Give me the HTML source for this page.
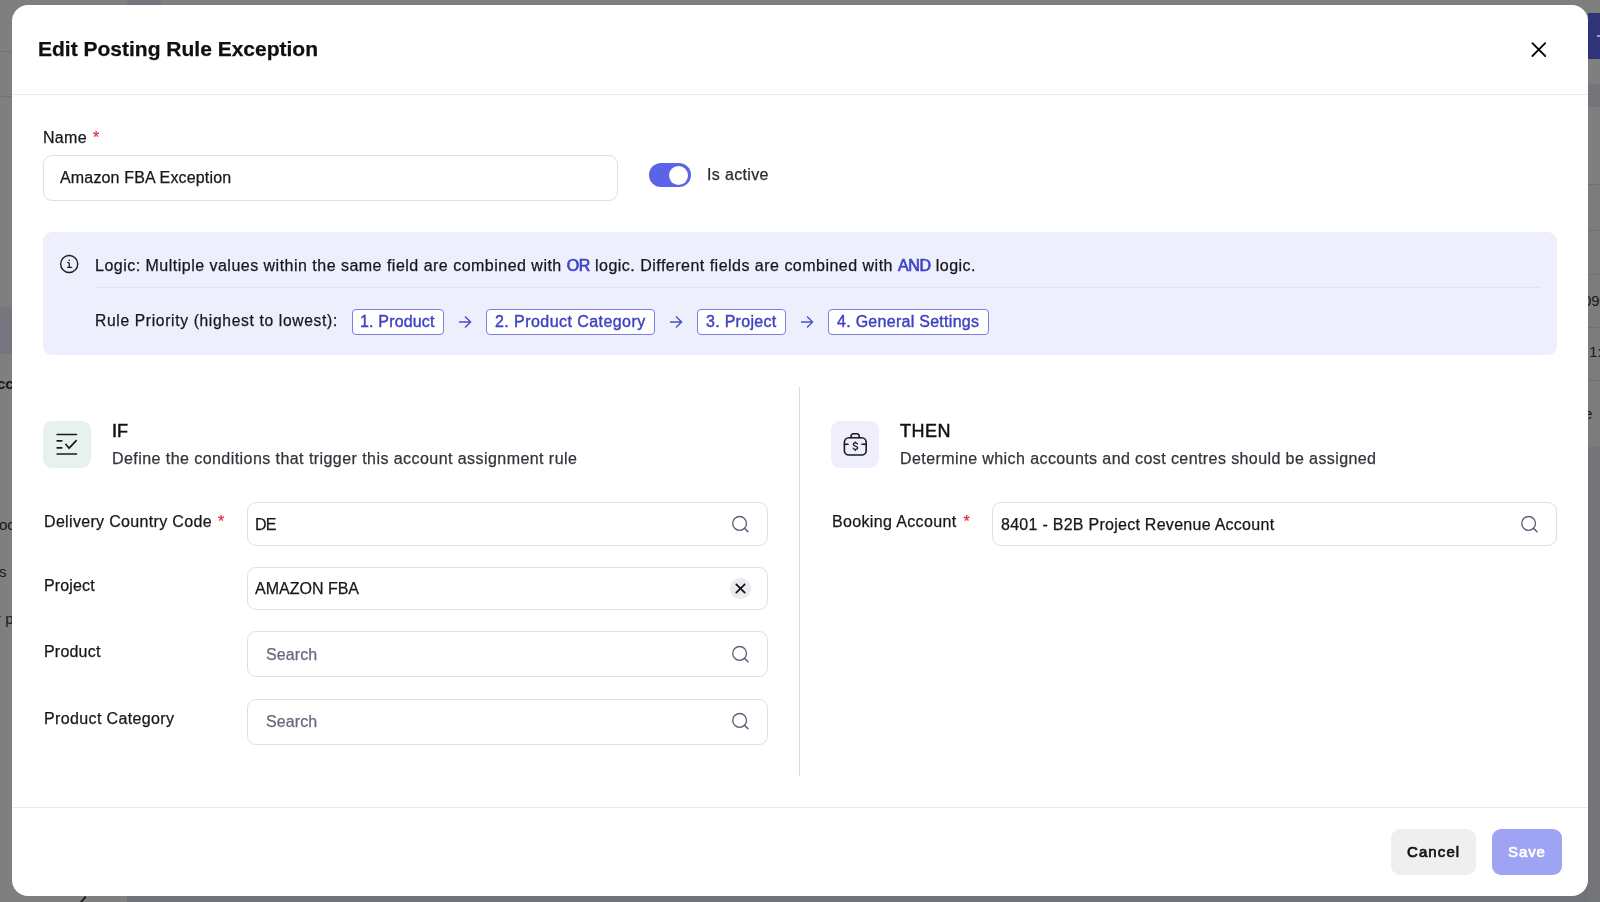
<!DOCTYPE html>
<html><head><meta charset="utf-8">
<style>
*{box-sizing:border-box;margin:0;padding:0}
html,body{width:1600px;height:902px;overflow:hidden;background:#7f7f7f;font-family:"Liberation Sans",sans-serif;color:#17171d;position:relative;-webkit-font-smoothing:antialiased}
.a{position:absolute}
.t{position:absolute;white-space:nowrap;line-height:16px;font-size:16px;will-change:transform;-webkit-text-stroke:0.25px currentColor}
.inp{position:absolute;border:1px solid #dedfe6;border-radius:9px;background:#fff}
.chip{position:absolute;border:1px solid #7a7fdc;border-radius:4px;background:#fff;height:26px}
.chip span{will-change:transform;-webkit-text-stroke:0.4px currentColor;position:absolute;top:4px;white-space:nowrap;color:#3c42c2;font-size:16px;line-height:16px}
.arr{position:absolute;top:316px}
.req{color:#e3263b}
.ph{color:#646a7e}
.bgt{position:absolute;white-space:nowrap;font-size:15px;line-height:15px;color:#1a1a1a}
</style></head><body>
<!-- background fragments -->
<div class="a" style="left:127px;top:0;width:34px;height:6px;background:#76777c"></div>
<div class="a" style="left:127px;top:880px;width:1473px;height:22px;background:#717277"></div>
<div class="a" style="left:0;top:51px;width:12px;height:1px;background:#727272"></div>
<div class="a" style="left:0;top:96px;width:12px;height:1px;background:#727272"></div>
<div class="a" style="left:0;top:307px;width:12px;height:47px;background:#76767e"></div>
<div class="bgt" style="left:-3px;top:376px;font-weight:bold">cc</div>
<div class="bgt" style="left:-1px;top:517px">oc</div>
<div class="bgt" style="left:-1px;top:564px">s</div>
<div class="bgt" style="left:-4px;top:611px">r p</div>
<div class="a" style="left:1588px;top:13px;width:12px;height:46px;background:#2f3378"></div>
<div class="a" style="left:1597px;top:35px;width:3px;height:2px;background:#9a9cc0"></div>
<div class="a" style="left:1588px;top:84px;width:12px;height:23px;background:#747579"></div>
<div class="a" style="left:1588px;top:184px;width:12px;height:263px;background:#7b7c7b"></div>
<div class="a" style="left:1588px;top:184px;width:12px;height:1px;background:#717171"></div>
<div class="a" style="left:1588px;top:230px;width:12px;height:1px;background:#717171"></div>
<div class="a" style="left:1588px;top:274px;width:12px;height:1px;background:#717171"></div>
<div class="a" style="left:1588px;top:327px;width:12px;height:1px;background:#717171"></div>
<div class="a" style="left:1588px;top:380px;width:12px;height:1px;background:#717171"></div>
<div class="bgt" style="left:1583px;top:293px">09</div>
<div class="bgt" style="left:1589px;top:344px">1:</div>
<div class="bgt" style="left:1584px;top:406px">e</div>
<div class="a" style="left:1588px;top:447px;width:12px;height:455px;background:#737478"></div>
<svg class="a" style="left:76px;top:892px" width="14" height="10" viewBox="0 0 14 10"><path d="M4.6 10.5L9.8 4.6" stroke="#111" stroke-width="1.6"/></svg>
<!-- modal -->
<div class="a" style="left:12px;top:5px;width:1576px;height:891px;background:#fff;border-radius:16px"></div>

<div class="t" style="left:38px;top:38px;font-size:21px;line-height:21px;font-weight:bold;color:#0e0e13">Edit Posting Rule Exception</div>
<svg class="a" style="left:1530px;top:41px" width="17" height="17" viewBox="0 0 17 17"><path d="M2.4 2.2L15.2 15M15.2 2.2L2.4 15" stroke="#050507" stroke-width="1.8" stroke-linecap="round"/></svg>
<div class="a" style="left:12px;top:94px;width:1576px;height:1px;background:#e9e9ef"></div>

<div class="t" style="left:43px;top:130px;letter-spacing:0.3px">Name<span class="req" style="margin-left:6px">*</span></div>
<div class="inp" style="left:43px;top:155px;width:575px;height:46px"></div>
<div class="t" style="left:60px;top:170px;letter-spacing:0.16px">Amazon FBA Exception</div>

<div class="a" style="left:649px;top:163px;width:42px;height:24px;border-radius:12px;background:#5b63e9"></div>
<div class="a" style="left:669px;top:166px;width:19px;height:19px;border-radius:50%;background:#fff"></div>
<div class="t" style="left:707px;top:167px;color:#2a2a31;letter-spacing:0.35px">Is active</div>

<!-- info box -->
<div class="a" style="left:43px;top:232px;width:1514px;height:122.5px;background:#eeeffc;border-radius:9px"></div>
<svg class="a" style="left:59px;top:254px" width="20" height="20" viewBox="0 0 20 20"><circle cx="10.2" cy="10" r="8.55" fill="none" stroke="#1d1d24" stroke-width="1.4"/><path d="M8.9 8.5Q10.3 8.5 10.3 9.7V13.4M8.7 13.4H12.7" stroke="#1d1d24" stroke-width="1.3" fill="none" stroke-linecap="round"/><circle cx="10.3" cy="6.3" r="0.8" fill="#1d1d24"/></svg>
<div class="t" style="left:95px;top:258px;letter-spacing:0.485px">Logic: Multiple values within the same field are combined with <span style="color:#3f45c5;-webkit-text-stroke:0.7px #3f45c5;letter-spacing:-0.3px">OR</span> logic. Different fields are combined with <span style="color:#3f45c5;-webkit-text-stroke:0.7px #3f45c5;letter-spacing:-0.3px">AND</span> logic.</div>
<div class="a" style="left:95px;top:287px;width:1445px;height:1px;background:#e0e2f6"></div>
<div class="t" style="left:95px;top:313.4px;font-size:15.6px;letter-spacing:0.67px">Rule Priority (highest to lowest):</div>

<div class="chip" style="left:352px;top:309px;width:92px"><span style="left:7px;letter-spacing:0.17px">1. Product</span></div>
<svg class="arr" style="left:458px" width="14" height="12" viewBox="0 0 14 12"><path d="M1 6H12.6M7 0.6L12.6 6L7 11.4" stroke="#4a50c8" stroke-width="1.4" fill="none"/></svg>
<div class="chip" style="left:486px;top:309px;width:169px"><span style="left:8px;letter-spacing:0.44px">2. Product Category</span></div>
<svg class="arr" style="left:669px" width="14" height="12" viewBox="0 0 14 12"><path d="M1 6H12.6M7 0.6L12.6 6L7 11.4" stroke="#4a50c8" stroke-width="1.4" fill="none"/></svg>
<div class="chip" style="left:697px;top:309px;width:89px"><span style="left:8px;letter-spacing:0.29px">3. Project</span></div>
<svg class="arr" style="left:800px" width="14" height="12" viewBox="0 0 14 12"><path d="M1 6H12.6M7 0.6L12.6 6L7 11.4" stroke="#4a50c8" stroke-width="1.4" fill="none"/></svg>
<div class="chip" style="left:828px;top:309px;width:161px"><span style="left:8px;letter-spacing:0.28px">4. General Settings</span></div>

<!-- divider -->
<div class="a" style="left:799px;top:387px;width:1px;height:389px;background:#d9dbe3"></div>

<!-- IF -->
<div class="a" style="left:43px;top:421px;width:48px;height:47px;background:#e7f1ed;border-radius:9px"></div>
<svg class="a" style="left:43px;top:421px" width="48" height="47" viewBox="0 0 48 47"><g stroke="#1a1a20" stroke-width="1.7" stroke-linecap="round" fill="none"><path d="M14.2 13.5H33.4M14.2 33H33.4M14.2 19.8H18.8M14.2 26.8H18.8M22.8 23.3L26.1 27.2L33.2 19.6"/></g></svg>
<div class="t" style="left:112px;top:422px;font-size:18px;line-height:18px;color:#111117;-webkit-text-stroke:0.5px #111117">IF</div>
<div class="t" style="left:112px;top:451px;color:#33333b;letter-spacing:0.44px">Define the conditions that trigger this account assignment rule</div>

<div class="t" style="left:44px;top:514px;letter-spacing:0.33px">Delivery Country Code<span class="req" style="margin-left:6px">*</span></div>
<div class="inp" style="left:247px;top:502px;width:521px;height:44px"></div>
<div class="t" style="left:255px;top:517px;letter-spacing:-0.8px">DE</div>
<svg class="a" style="left:730px;top:514px" width="20" height="20" viewBox="0 0 20 20"><circle cx="9.6" cy="9.4" r="6.9" fill="none" stroke="#5b6178" stroke-width="1.35"/><path d="M14.6 14.4L18 17.8" stroke="#5b6178" stroke-width="1.5" stroke-linecap="round"/></svg>

<div class="t" style="left:44px;top:578px;letter-spacing:0.15px">Project</div>
<div class="inp" style="left:247px;top:567px;width:521px;height:43px"></div>
<div class="t" style="left:255px;top:581px">AMAZON FBA</div>
<div class="a" style="left:730px;top:578px;width:21px;height:21px;border-radius:50%;background:#ebebef"></div>
<svg class="a" style="left:730px;top:578px" width="21" height="21" viewBox="0 0 21 21"><path d="M6.3 6.3L14.7 14.7M14.7 6.3L6.3 14.7" stroke="#111" stroke-width="1.7" stroke-linecap="round"/></svg>

<div class="t" style="left:44px;top:644px;letter-spacing:0.2px">Product</div>
<div class="inp" style="left:247px;top:631px;width:521px;height:46px"></div>
<div class="t ph" style="left:266px;top:647px;letter-spacing:0.1px">Search</div>
<svg class="a" style="left:730px;top:644px" width="20" height="20" viewBox="0 0 20 20"><circle cx="9.6" cy="9.4" r="6.9" fill="none" stroke="#5b6178" stroke-width="1.35"/><path d="M14.6 14.4L18 17.8" stroke="#5b6178" stroke-width="1.5" stroke-linecap="round"/></svg>

<div class="t" style="left:44px;top:711px;letter-spacing:0.37px">Product Category</div>
<div class="inp" style="left:247px;top:699px;width:521px;height:46px"></div>
<div class="t ph" style="left:266px;top:714px;letter-spacing:0.1px">Search</div>
<svg class="a" style="left:730px;top:711px" width="20" height="20" viewBox="0 0 20 20"><circle cx="9.6" cy="9.4" r="6.9" fill="none" stroke="#5b6178" stroke-width="1.35"/><path d="M14.6 14.4L18 17.8" stroke="#5b6178" stroke-width="1.5" stroke-linecap="round"/></svg>

<!-- THEN -->
<div class="a" style="left:831px;top:421px;width:48px;height:47px;background:#eeeffb;border-radius:9px"></div>
<svg class="a" style="left:831px;top:421px" width="48" height="47" viewBox="0 0 48 47"><g stroke="#1a1a20" stroke-width="1.6" stroke-linecap="round" fill="none"><path d="M20 16.8V15a2.2 2.2 0 0 1 2.2 -2.2h3.8a2.2 2.2 0 0 1 2.2 2.2V16.8"/><rect x="13.4" y="16.8" width="21.8" height="17.2" rx="4.6"/><path d="M13.4 23.3H17M31 23.3H35.2"/><path d="M26.4 23c-0.3-0.7-1-1.1-2-1.1c-1.2 0-2.1 0.6-2.1 1.5c0 2.2 4.3 1.1 4.3 3.4c0 0.9-0.9 1.6-2.2 1.6c-1 0-1.8-0.4-2.2-1.2M24.2 20.8V21.9M24.2 28.4V29.5" stroke-width="1.3"/></g></svg>
<div class="t" style="left:900px;top:422px;font-size:18px;line-height:18px;color:#111117;-webkit-text-stroke:0.5px #111117;letter-spacing:0.5px">THEN</div>
<div class="t" style="left:900px;top:451px;color:#33333b;letter-spacing:0.41px">Determine which accounts and cost centres should be assigned</div>

<div class="t" style="left:832px;top:514px;letter-spacing:0.35px">Booking Account<span class="req" style="margin-left:7px">*</span></div>
<div class="inp" style="left:992px;top:502px;width:565px;height:44px"></div>
<div class="t" style="left:1001px;top:517px;letter-spacing:0.27px">8401 - B2B Project Revenue Account</div>
<svg class="a" style="left:1519px;top:514px" width="20" height="20" viewBox="0 0 20 20"><circle cx="9.6" cy="9.4" r="6.9" fill="none" stroke="#5b6178" stroke-width="1.35"/><path d="M14.6 14.4L18 17.8" stroke="#5b6178" stroke-width="1.5" stroke-linecap="round"/></svg>

<!-- footer -->
<div class="a" style="left:12px;top:807px;width:1576px;height:1px;background:#e8e8ee"></div>
<div class="a" style="left:1391px;top:829px;width:85px;height:46px;background:#efeff0;border-radius:9px"></div>
<div class="t" style="left:1407px;top:844px;font-size:15px;line-height:15px;color:#111116;-webkit-text-stroke:0.7px #111116;letter-spacing:1.1px">Cancel</div>
<div class="a" style="left:1492px;top:829px;width:70px;height:46px;background:#9ea3f3;border-radius:9px"></div>
<div class="t" style="left:1508px;top:844px;font-size:15px;line-height:15px;color:#fff;-webkit-text-stroke:0.7px #fff;letter-spacing:0.9px">Save</div>
</body></html>
